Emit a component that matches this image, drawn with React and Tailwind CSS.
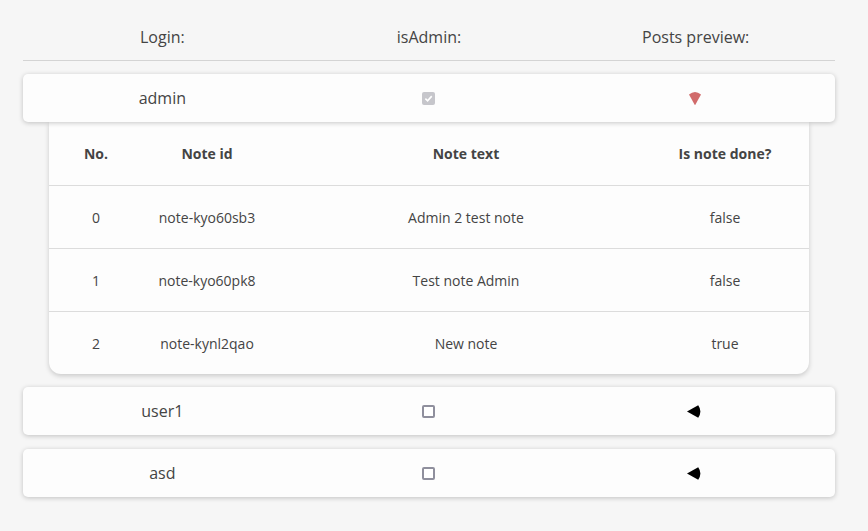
import React from "react";

const users = [
  {
    login: "admin",
    isAdmin: true,
    open: true,
    notes: [
      { id: "note-kyo60sb3", text: "Admin 2 test note", done: false },
      { id: "note-kyo60pk8", text: "Test note Admin", done: false },
      { id: "note-kynl2qao", text: "New note", done: true },
    ],
  },
  { login: "user1", isAdmin: false, open: false, notes: [] },
  { login: "asd", isAdmin: false, open: false, notes: [] },
];

const Checkbox = ({ checked }) =>
  checked ? (
    <span className="w-[13px] h-[13px] rounded-[2px] bg-[#c6c6cb] flex items-center justify-center">
      <svg width="9" height="9" viewBox="0 0 10 10">
        <path d="M1.5 5.2 L4 7.6 L8.6 2.4" fill="none" stroke="#fff" strokeWidth="1.8" />
      </svg>
    </span>
  ) : (
    <span className="w-[13px] h-[13px] rounded-[2px] border-2 border-[#8f8f9d] bg-white"></span>
  );

// disclosure marker, red when the notes are shown
const Arrow = ({ open }) =>
  open ? (
    <svg width="12" height="14" viewBox="0 0 12 14" className="mr-[1px] mt-[-1px]">
      <path d="M0 3.6 Q6 -1.6 12 3.6 L6.2 14 L5.8 14 Z" fill="#d16b6b" />
    </svg>
  ) : (
    <svg width="15" height="13" viewBox="0 0 15 13" className="mr-[2px]">
      <path d="M0 6.5 L11.2 0.3 Q15.6 6.5 11.2 12.7 Z" fill="#000" />
    </svg>
  );

const NotesTable = ({ notes }) => (
  <div className="mx-[26px] bg-[#fdfdfd] rounded-b-xl shadow-[0_2px_5px_rgba(0,0,0,0.18)] text-sm text-[#444]">
    <div className="grid grid-cols-[94px_128px_390px_128px] h-[63px] pt-[1px] items-center text-center font-bold">
      <div>No.</div>
      <div>Note id</div>
      <div>Note text</div>
      <div>Is note done?</div>
    </div>
    {notes.map((n, i) => (
      <div
        key={n.id}
        className="grid grid-cols-[94px_128px_390px_128px] h-[63px] pt-[1px] items-center text-center border-t border-[#dcdcdc]"
      >
        <div>{i}</div>
        <div>{n.id}</div>
        <div>{n.text}</div>
        <div>{n.done ? "true" : "false"}</div>
      </div>
    ))}
  </div>
);

export default function App() {
  return (
    <div
      className="min-h-[531px] bg-[#f6f6f6] text-[#444]"
      style={{ fontFamily: '"Open Sans", sans-serif' }}
    >
      <div className="ml-[23px] w-[812px] pb-[20px]">
        <div className="grid grid-cols-3 px-[6px] pt-[26px] pb-[12px] leading-[22px] text-base text-center border-b border-[#d4d4d4]">
          <div>Login:</div>
          <div>isAdmin:</div>
          <div>Posts preview:</div>
        </div>
        <div className="flex flex-col pt-[13px]">
          {users.map((u) => (
            <div key={u.login} className={u.open ? "mb-[13px]" : "mb-[14px]"}>
              <div className="grid grid-cols-3 px-[6px] h-[48px] items-center text-center text-base bg-[#fdfdfd] rounded-[5px] shadow-[0_1px_5px_rgba(0,0,0,0.22)] relative">
                <div>{u.login}</div>
                <div className="flex justify-center">
                  <Checkbox checked={u.isAdmin} />
                </div>
                <div className="flex justify-center">
                  <Arrow open={u.open} />
                </div>
              </div>
              {u.open && <NotesTable notes={u.notes} />}
            </div>
          ))}
        </div>
      </div>
    </div>
  );
}
